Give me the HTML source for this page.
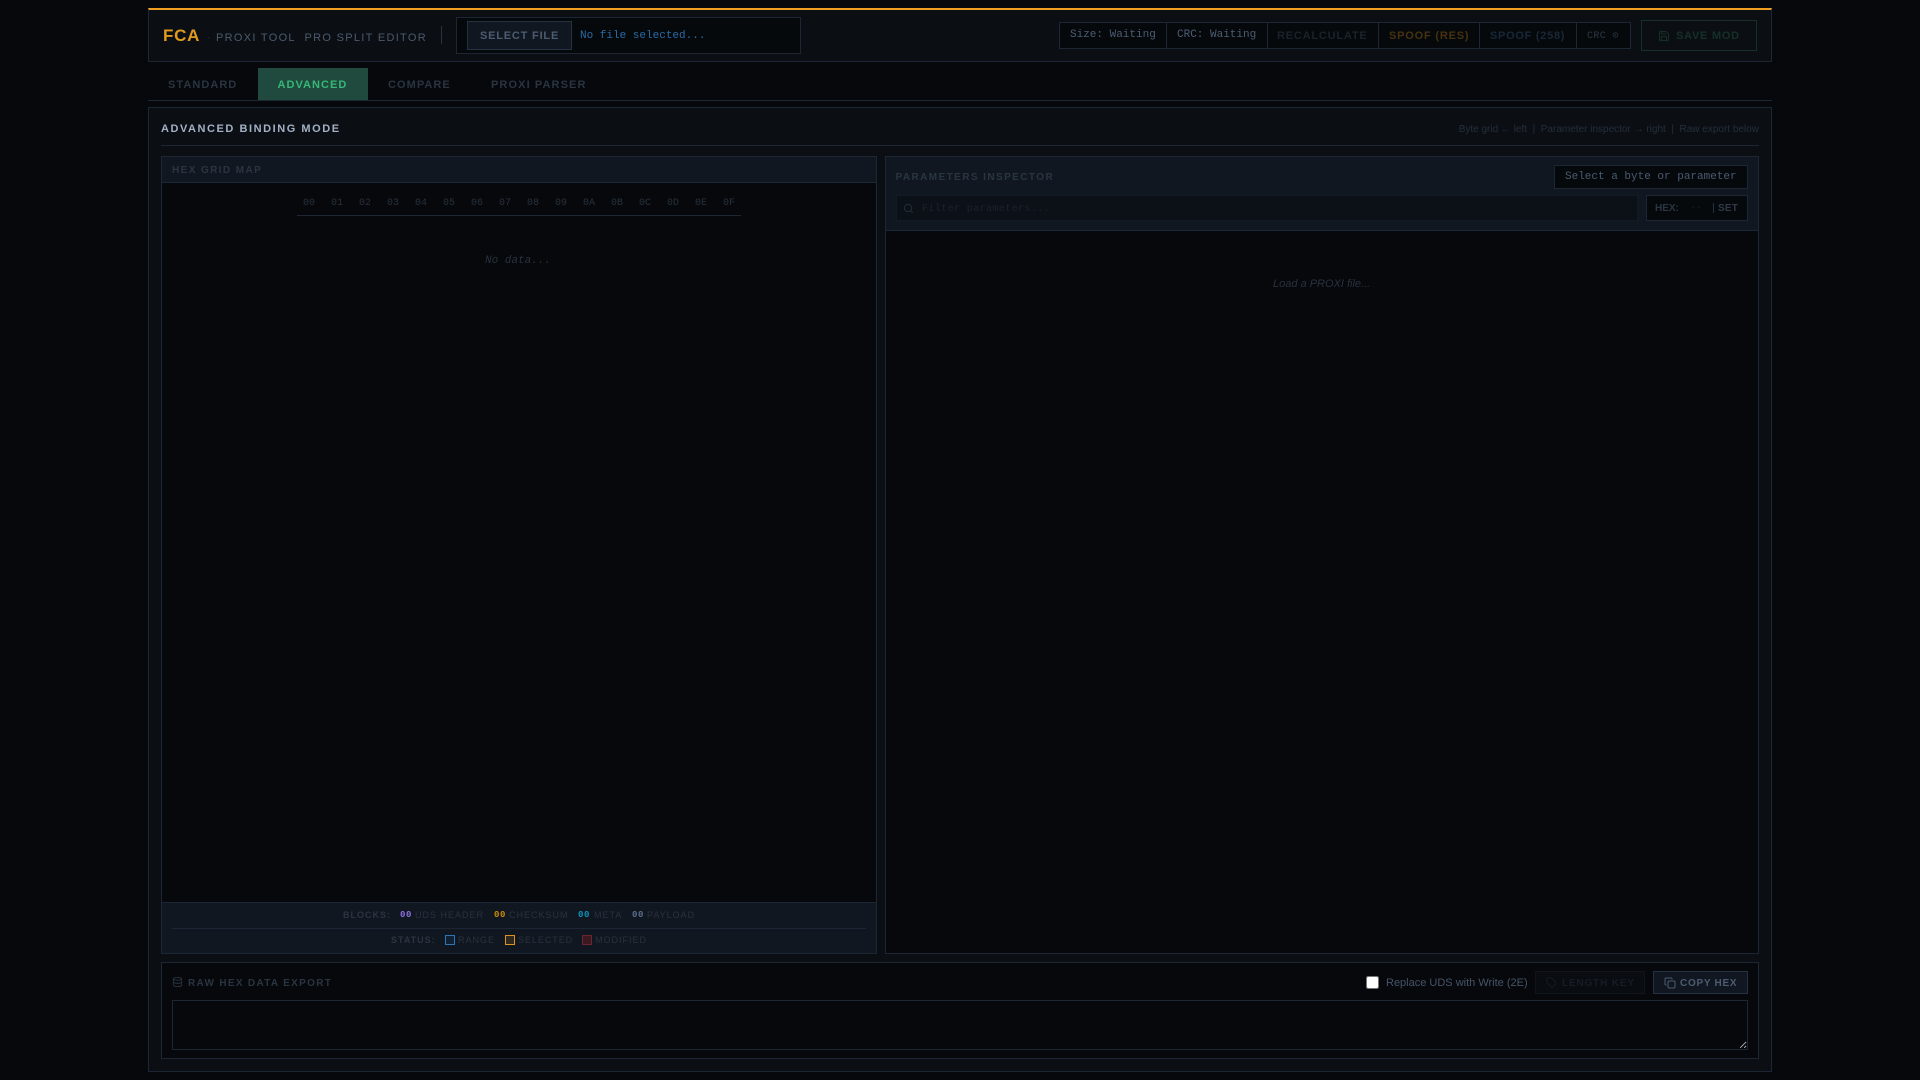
<!DOCTYPE html>
<html><head><meta charset="utf-8"><title>FCA PROXI Tool</title>
<style>
html,body{margin:0;padding:0;background:#06080b;width:1920px;height:1080px;overflow:hidden}
*{box-sizing:border-box}
body{font-family:"Liberation Sans",sans-serif;position:relative}
.a{position:absolute}
.t{position:absolute;white-space:nowrap;line-height:14px;height:14px}
.m{font-family:"Liberation Mono",monospace}
.b{border:1px solid #1c2635}
svg{position:absolute;fill:none;stroke-linecap:round;stroke-linejoin:round}
</style></head><body>
<!-- header -->
<div class="a" style="left:148px;top:8px;width:1624px;height:54px;background:#0b0f14;border:1px solid #1c2635;border-top:2px solid #f0a020"></div>
<div class="t" style="left:163px;top:29px;font-size:17px;line-height:14px;font-weight:bold;color:#e09a1e;letter-spacing:.75px">FCA</div>
<div class="t" style="left:207px;top:31px;font-size:11px;color:#222c39">·</div>
<div class="t" style="left:216px;top:31px;font-size:11px;color:#4c5a6c;letter-spacing:1.3px">PROXI TOOL</div>
<div class="t" style="left:304.5px;top:31px;font-size:11px;color:#4c5a6c;letter-spacing:1.3px">PRO SPLIT EDITOR</div>
<div class="a" style="left:441px;top:26px;width:1px;height:18px;background:#263242"></div>
<div class="a b" style="left:456px;top:17px;width:345px;height:37px;background:#06090c"></div>
<div class="a" style="left:467px;top:21px;width:105px;height:29px;background:#111720;border:1px solid #263242"></div>
<div class="t" style="left:480px;top:29px;font-size:11px;font-weight:bold;color:#4c5c72;letter-spacing:.8px">SELECT FILE</div>
<div class="t m" style="left:580px;top:28.5px;font-size:11px;color:#2a6aa5">No file selected...</div>

<div class="a b" style="left:1059px;top:22px;width:572px;height:27px;background:#06090c"></div>
<div class="a" style="left:1166px;top:22px;width:1px;height:27px;background:#1c2635"></div>
<div class="a" style="left:1267px;top:22px;width:1px;height:27px;background:#1c2635"></div>
<div class="a" style="left:1378px;top:22px;width:1px;height:27px;background:#1c2635"></div>
<div class="a" style="left:1479px;top:22px;width:1px;height:27px;background:#1c2635"></div>
<div class="a" style="left:1576px;top:22px;width:1px;height:27px;background:#1c2635"></div>
<div class="t m" style="left:1070px;top:28px;font-size:11px;color:#4c5c72">Size: Waiting</div>
<div class="t m" style="left:1177px;top:28px;font-size:11px;color:#4c5c72">CRC: Waiting</div>
<div class="t" style="left:1277px;top:29px;font-size:11px;font-weight:bold;color:#1a222c;letter-spacing:.8px">RECALCULATE</div>
<div class="t" style="left:1389px;top:29px;font-size:11px;font-weight:bold;color:#46320f;letter-spacing:.8px">SPOOF (RES)</div>
<div class="t" style="left:1490px;top:29px;font-size:11px;font-weight:bold;color:#182838;letter-spacing:.72px">SPOOF (258)</div>
<div class="t m" style="left:1587px;top:30px;font-size:10px;color:#2c3846;letter-spacing:.35px">CRC ⊙</div>
<div class="a" style="left:1641px;top:20px;width:116px;height:31px;border:1px solid #163027"></div>
<svg style="left:1658px;top:30px" width="12" height="12" viewBox="0 0 24 24" stroke="#163027" stroke-width="2"><path d="M15.2 3a2 2 0 0 1 1.4.6l3.8 3.8a2 2 0 0 1 .6 1.4V19a2 2 0 0 1-2 2H5a2 2 0 0 1-2-2V5a2 2 0 0 1 2-2z"/><path d="M17 21v-7a1 1 0 0 0-1-1H8a1 1 0 0 0-1 1v7"/><path d="M7 3v4a1 1 0 0 0 1 1h7"/></svg>
<div class="t" style="left:1676px;top:29px;font-size:11px;font-weight:bold;color:#163027;letter-spacing:.75px">SAVE MOD</div>

<!-- tabs -->
<div class="a" style="left:148px;top:100px;width:1624px;height:1px;background:#1c2635"></div>
<div class="a" style="left:258px;top:68px;width:110px;height:32px;background:#1f4a3d"></div>
<div class="t" style="left:168px;top:78px;font-size:11px;font-weight:bold;color:#2a3542;letter-spacing:1.05px">STANDARD</div>
<div class="t" style="left:277.5px;top:78px;font-size:11px;font-weight:bold;color:#37b878;letter-spacing:1.05px">ADVANCED</div>
<div class="t" style="left:388px;top:78px;font-size:11px;font-weight:bold;color:#2a3542;letter-spacing:1.05px">COMPARE</div>
<div class="t" style="left:491px;top:78px;font-size:11px;font-weight:bold;color:#2a3542;letter-spacing:1.1px">PROXI PARSER</div>

<!-- main panel -->
<div class="a b" style="left:148px;top:107px;width:1624px;height:965px;background:#0b0f14"></div>
<div class="t" style="left:161px;top:122px;font-size:11px;font-weight:bold;color:#a3b1c6;letter-spacing:1.55px">ADVANCED BINDING MODE</div>
<div class="t" style="right:161px;top:122.5px;font-size:10px;color:#242e3b">Byte grid ← left&nbsp; | &nbsp;Parameter inspector → right&nbsp; | &nbsp;Raw export below</div>
<div class="a" style="left:161px;top:145px;width:1598px;height:1px;background:#1c2635"></div>

<!-- hex panel -->
<div class="a b" style="left:161px;top:156px;width:716px;height:798px;background:#06080b"></div>
<div class="a b" style="left:161px;top:156px;width:716px;height:27px;background:#111720"></div>
<div class="t" style="left:172px;top:163.5px;font-size:10px;font-weight:bold;color:#2a3542;letter-spacing:1.4px">HEX GRID MAP</div>
<div class="a" style="left:297px;top:215px;width:444px;height:1px;background:#1c2635"></div>
<div class="m" style="font-size:10px;color:#28323f">
<div class="t" style="left:303px;top:197px">00</div><div class="t" style="left:331px;top:197px">01</div><div class="t" style="left:359px;top:197px">02</div><div class="t" style="left:387px;top:197px">03</div><div class="t" style="left:415px;top:197px">04</div><div class="t" style="left:443px;top:197px">05</div><div class="t" style="left:471px;top:197px">06</div><div class="t" style="left:499px;top:197px">07</div><div class="t" style="left:527px;top:197px">08</div><div class="t" style="left:555px;top:197px">09</div><div class="t" style="left:583px;top:197px">0A</div><div class="t" style="left:611px;top:197px">0B</div><div class="t" style="left:639px;top:197px">0C</div><div class="t" style="left:667px;top:197px">0D</div><div class="t" style="left:695px;top:197px">0E</div><div class="t" style="left:723px;top:197px">0F</div>
</div>
<div class="t m" style="left:485px;top:253.5px;font-size:11px;font-style:italic;color:#28323f">No data...</div>

<!-- legend -->
<div class="a b" style="left:161px;top:902px;width:716px;height:52px;background:#111720"></div>
<div class="a" style="left:172px;top:928px;width:694px;height:1px;background:#1c2635"></div>
<div class="t" style="left:343px;top:908px;font-size:9px;font-weight:bold;letter-spacing:1px;color:#2a3542">BLOCKS:</div>
<div class="t m" style="left:400px;top:908px;font-size:9px;font-weight:bold;letter-spacing:.6px;color:#8b6fe0">00</div>
<div class="t" style="left:415px;top:908px;font-size:9px;letter-spacing:1px;color:#28323f">UDS HEADER</div>
<div class="t m" style="left:494px;top:908px;font-size:9px;font-weight:bold;letter-spacing:.6px;color:#c8890c">00</div>
<div class="t" style="left:509px;top:908px;font-size:9px;letter-spacing:1px;color:#28323f">CHECKSUM</div>
<div class="t m" style="left:578px;top:908px;font-size:9px;font-weight:bold;letter-spacing:.6px;color:#0e93b5">00</div>
<div class="t" style="left:594px;top:908px;font-size:9px;letter-spacing:1px;color:#28323f">META</div>
<div class="t m" style="left:632px;top:908px;font-size:9px;font-weight:bold;letter-spacing:.6px;color:#5a6e8c">00</div>
<div class="t" style="left:647px;top:908px;font-size:9px;letter-spacing:1px;color:#28323f">PAYLOAD</div>

<div class="t" style="left:391px;top:933px;font-size:9px;font-weight:bold;letter-spacing:1px;color:#2a3542">STATUS:</div>
<div class="a" style="left:445px;top:935px;width:10px;height:10px;border:1px solid #2f75b5;background:#0f2235"></div>
<div class="t" style="left:458px;top:933px;font-size:9px;letter-spacing:1px;color:#28323f">RANGE</div>
<div class="a" style="left:505px;top:935px;width:10px;height:10px;border:1px solid #d9951f;background:#30281a"></div>
<div class="t" style="left:518px;top:933px;font-size:9px;letter-spacing:.95px;color:#28323f">SELECTED</div>
<div class="a" style="left:582px;top:935px;width:10px;height:10px;border:1px solid #6b2530;background:#3a1a20"></div>
<div class="t" style="left:595px;top:933px;font-size:9px;letter-spacing:1px;color:#28323f">MODIFIED</div>

<!-- param panel -->
<div class="a b" style="left:885px;top:156px;width:874px;height:798px;background:#06080b"></div>
<div class="a b" style="left:885px;top:156px;width:874px;height:75px;background:#111720"></div>
<div class="t" style="left:895.5px;top:170.5px;font-size:10px;font-weight:bold;color:#2a3542;letter-spacing:1.42px">PARAMETERS INSPECTOR</div>
<div class="a b" style="left:1554px;top:165px;width:194px;height:24px;background:#06090c"></div>
<div class="t m" style="left:1565px;top:170px;font-size:11px;color:#4a5a70">Select a byte or parameter</div>
<div class="a" style="left:896px;top:195px;width:742px;height:26px;background:#0c1118;border:1px solid #131a24"></div>
<svg style="left:903px;top:203px" width="11" height="11" viewBox="0 0 24 24" stroke="#242e3b" stroke-width="2"><circle cx="11" cy="11" r="8"/><path d="m21 21-4.3-4.3"/></svg>
<div class="t m" style="left:922px;top:203px;font-size:10px;letter-spacing:.4px;color:#1a222c">Filter parameters...</div>
<div class="a b" style="left:1646px;top:195px;width:102px;height:26px;background:#06090c"></div>
<div class="t" style="left:1655px;top:201.5px;font-size:10px;font-weight:bold;color:#2a3542">HEX:</div>
<div class="t m" style="left:1690px;top:201.5px;font-size:10px;color:#161d26">--</div>
<div class="a" style="left:1713px;top:203px;width:1px;height:10px;background:#263242"></div>
<div class="t" style="left:1718px;top:201.5px;font-size:10px;font-weight:bold;letter-spacing:.2px;color:#2f3a49">SET</div>
<div class="t" style="left:1273px;top:276.5px;font-size:11px;font-style:italic;color:#28323f">Load a PROXI file...</div>

<!-- export -->
<div class="a b" style="left:161px;top:962px;width:1598px;height:97px;background:#06080b"></div>
<svg style="left:172px;top:976px" width="11" height="12" viewBox="0 0 24 24" stroke="#28323f" stroke-width="2"><ellipse cx="12" cy="5" rx="9" ry="3"/><path d="M3 5v14a9 3 0 0 0 18 0V5"/><path d="M3 12a9 3 0 0 0 18 0"/></svg>
<div class="t" style="left:188px;top:976.5px;font-size:10px;font-weight:bold;color:#2a3542;letter-spacing:1.31px">RAW HEX DATA EXPORT</div>
<input type="checkbox" class="a" style="left:1366px;top:976px;width:13px;height:13px;margin:0">
<div class="t" style="left:1386px;top:975.5px;font-size:11px;color:#465568">Replace UDS with Write (2E)</div>
<div class="a" style="left:1535px;top:971px;width:110px;height:23px;border:1px solid #10151d;background:#090c11"></div>
<svg style="left:1546px;top:977px" width="11" height="11" viewBox="0 0 24 24" stroke="#161d26" stroke-width="2"><path d="M12.6 2.6A2 2 0 0 0 11.2 2H4a2 2 0 0 0-2 2v7.2a2 2 0 0 0 .6 1.4l8.7 8.7a2.4 2.4 0 0 0 3.4 0l6.6-6.6a2.4 2.4 0 0 0 0-3.4z"/></svg>
<div class="t" style="left:1562px;top:976.5px;font-size:10px;font-weight:bold;color:#161d26;letter-spacing:.85px">LENGTH KEY</div>
<div class="a" style="left:1653px;top:971px;width:95px;height:23px;border:1px solid #263242;background:#111720"></div>
<svg style="left:1663.5px;top:976.5px" width="12" height="12" viewBox="0 0 24 24" stroke="#4c5c72" stroke-width="2"><rect width="14" height="14" x="8" y="8" rx="2"/><path d="M4 16c-1.1 0-2-.9-2-2V4c0-1.1.9-2 2-2h10c1.1 0 2 .9 2 2"/></svg>
<div class="t" style="left:1680px;top:976.5px;font-size:10px;font-weight:bold;color:#4c5c72;letter-spacing:.72px">COPY HEX</div>
<textarea class="a" style="left:172px;top:1000px;width:1576px;height:50px;margin:0;background:#06080b;border:1px solid #1c2635;outline:0;padding:0"></textarea>
</body></html>
